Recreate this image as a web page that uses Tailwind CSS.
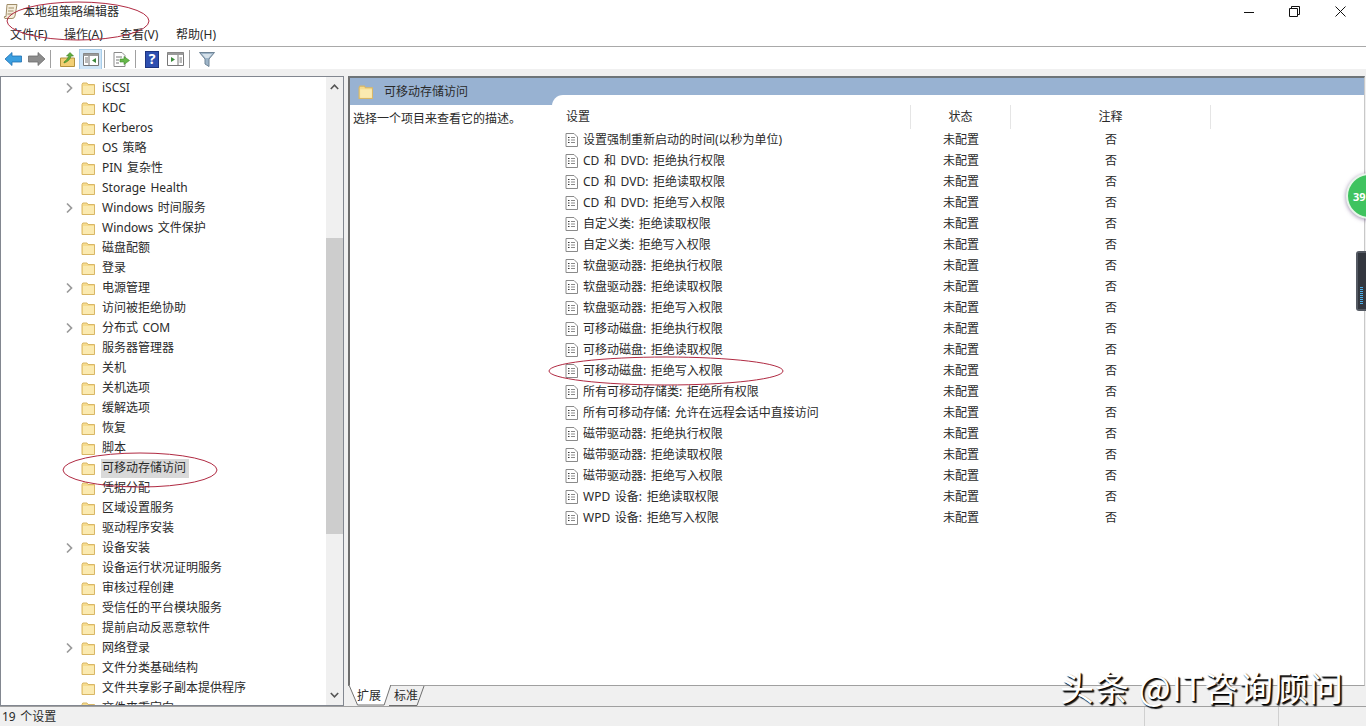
<!DOCTYPE html>
<html lang="zh-CN">
<head>
<meta charset="utf-8">
<title>本地组策略编辑器</title>
<script src="https://cdn.jsdelivr.net/npm/@tailwindcss/browser@4"></script>
</head>
<body>
<svg class="hidden">
  <symbol id="folder" viewBox="0 0 15 15">
    <path d="M1 3.5 L1.8 2 H6 L7 3.5 H13.5 V13.5 H1 Z" fill="#f6dc8e" stroke="#d9b766" stroke-width="1"/>
    <path d="M2 5 H13 V13 H2 Z" fill="#fbeab0"/>
  </symbol>
  <symbol id="chev" viewBox="0 0 8 12"><path d="M1.5 1.5 L6 6 L1.5 10.5" fill="none" stroke="#9a9a9a" stroke-width="1.7"/></symbol>
  <symbol id="doc" viewBox="0 0 13 14">
    <path d="M1 .5 H9 L12.5 4 V13.5 H1 Z" fill="#fff" stroke="#8a8a8a"/>
    <path d="M3 4.5 H4.5 M3 7 H4.5 M3 9.5 H4.5" stroke="#333" stroke-width="1.2"/>
    <path d="M6 4.5 H10 M6 7 H10 M6 9.5 H10" stroke="#8a8a8a" stroke-width="1"/>
  </symbol>
</svg>
<div class="relative w-[1366px] h-[726px] overflow-hidden flex flex-col bg-white text-[12px] leading-none text-[#2a2a2a] [word-spacing:1.5px] font-['Noto_Sans','Noto_Sans_CJK_SC',sans-serif]">

  <!-- title bar -->
  <div class="h-[23px] flex items-center pl-[3px] shrink-0">
    <svg width="16" height="17" viewBox="0 0 16 17"><path d="M4 1.5 H14 L12 13 Q11.5 15.5 9 15.5 H2 Q1 15.5 1.5 13.5 H3 Z" fill="#f5eedc" stroke="#a08d68"/><path d="M5.5 5 H11 M5 8 H10.5 M4.5 11 H10" stroke="#a08d68"/></svg>
    <span class="ml-[4px]">本地组策略编辑器</span>
    <div class="ml-auto flex items-center pr-[20px] gap-[35px]">
      <svg width="10" height="10" viewBox="0 0 10 10"><path d="M0 5.5 H10" stroke="#111"/></svg>
      <svg width="11" height="11" viewBox="0 0 11 11"><path d="M.5 2.5 H8.5 V10.5 H.5 Z M2.5 2.5 V.5 H10.5 V8.5 H8.5" fill="none" stroke="#111"/></svg>
      <svg width="11" height="11" viewBox="0 0 11 11"><path d="M.5 .5 L10.5 10.5 M10.5 .5 L.5 10.5" stroke="#111"/></svg>
    </div>
  </div>

  <!-- menu -->
  <div class="h-[23px] flex items-center pl-[10px] shrink-0 border-b border-[#a9a9a9] box-content">
    <span class="w-[54px]">文件(F)</span>
    <span class="w-[56px]">操作(A)</span>
    <span class="w-[56px]">查看(V)</span>
    <span>帮助(H)</span>
  </div>

  <!-- toolbar -->
  <div class="h-[22px] flex items-center pl-[5px] pt-[2px] shrink-0">
    <svg width="17" height="14" viewBox="0 0 17 14"><path d="M0 7 L7 .5 V4 H16.5 V10 H7 V13.5 Z" fill="#3b9fe0" stroke="#1f6fb0" stroke-width=".8"/></svg>
    <svg class="ml-[6px]" width="17" height="14" viewBox="0 0 17 14"><path d="M17 7 L10 .5 V4 H.5 V10 H10 V13.5 Z" fill="#8d8d8d" stroke="#6d6d6d" stroke-width=".8"/></svg>
    <div class="ml-[5px] w-px h-[18px] bg-[#a0a0a0]"></div>
    <svg class="ml-[9px]" width="15" height="15" viewBox="0 0 15 15"><path d="M.5 6 H14.5 V14.5 H.5 Z" fill="#f2cf74" stroke="#b4923e"/><path d="M4 10 Q7 8 9 4 L6.5 4 L10 .5 L13.5 4 H11 Q10 9 4 11 Z" fill="#5fae3b" stroke="#3d7d22" stroke-width=".6"/></svg>
    <div class="ml-[4px] w-[23px] h-[21px] bg-[#cfe5f7] border border-[#a8cde9] flex items-center justify-center">
      <svg width="16" height="13" viewBox="0 0 16 13"><path d="M.5 .5 H15.5 V12.5 H.5 Z" fill="#fff" stroke="#777"/><path d="M.5 .5 H15.5 V3 H.5 Z" fill="#9a9a9a"/><path d="M6 3 V12.5" stroke="#777"/><path d="M2 5 H5 M2 7 H5 M2 9 H5" stroke="#777"/><path d="M13 5 L9 7.5 L13 10 Z" fill="#3c8a3c"/></svg>
    </div>
    <div class="ml-[2px] w-px h-[18px] bg-[#a0a0a0]"></div>
    <svg class="ml-[8px]" width="17" height="15" viewBox="0 0 17 15"><path d="M1 .5 H9 L12 3.5 V14.5 H1 Z" fill="#fff" stroke="#8a8a8a"/><path d="M3 5 H9 M3 8 H6 M3 11 H6" stroke="#777"/><path d="M7 7 H11 V4.5 L16.5 8.5 L11 12.5 V10 H7 Z" fill="#66b84a" stroke="#3f8a2a" stroke-width=".6"/></svg>
    <div class="ml-[5px] w-px h-[18px] bg-[#a0a0a0]"></div>
    <div class="ml-[9px] w-[14px] h-[17px] bg-[#2e4fb0] border border-[#1c3480] text-white font-bold text-[14px] flex items-center justify-center">?</div>
    <svg class="ml-[8px]" width="17" height="14" viewBox="0 0 17 14"><path d="M.5 .5 H16.5 V13.5 H.5 Z" fill="#fff" stroke="#777"/><path d="M.5 .5 H16.5 V3 H.5 Z" fill="#9a9a9a"/><path d="M11 3 V13.5" stroke="#777"/><path d="M12.5 6 H15 M12.5 8 H15 M12.5 10 H15" stroke="#777"/><path d="M4 5 L8 7.5 L4 10 Z" fill="#3c8a3c"/></svg>
    <div class="ml-[5px] w-px h-[18px] bg-[#a0a0a0]"></div>
    <svg class="ml-[9px]" width="16" height="15" viewBox="0 0 16 15"><path d="M.5 .5 H15.5 L10 7 V14.5 L6 12 V7 Z" fill="#9db4c8" stroke="#6f8496"/><path d="M3 2 H13 L9.5 6 H6.5 Z" fill="#d5e1ea"/></svg>
  </div>

  <div class="h-[7px] bg-[#f0f0f0] shrink-0"></div>

  <!-- body -->
  <div class="h-[631px] flex bg-[#f0f0f0] shrink-0 border-b border-[#a0a0a0]">
    <!-- left pane -->
    <div class="w-[344px] h-[630px] border border-[#828790] bg-white flex overflow-hidden shrink-0">
      <div class="flex-1 h-[628px] overflow-hidden pt-px">
        <div class="h-5 flex items-center pl-[63px]"><svg class="w-[17px] h-[12px] pr-[6px]"><use href="#chev"/></svg><svg class="w-[15px] h-[15px]"><use href="#folder"/></svg><span class="ml-[6px]">iSCSI</span></div>
        <div class="h-5 flex items-center pl-[80px]"><svg class="w-[15px] h-[15px]"><use href="#folder"/></svg><span class="ml-[6px]">KDC</span></div>
        <div class="h-5 flex items-center pl-[80px]"><svg class="w-[15px] h-[15px]"><use href="#folder"/></svg><span class="ml-[6px]">Kerberos</span></div>
        <div class="h-5 flex items-center pl-[80px]"><svg class="w-[15px] h-[15px]"><use href="#folder"/></svg><span class="ml-[6px]">OS 策略</span></div>
        <div class="h-5 flex items-center pl-[80px]"><svg class="w-[15px] h-[15px]"><use href="#folder"/></svg><span class="ml-[6px]">PIN 复杂性</span></div>
        <div class="h-5 flex items-center pl-[80px]"><svg class="w-[15px] h-[15px]"><use href="#folder"/></svg><span class="ml-[6px]">Storage Health</span></div>
        <div class="h-5 flex items-center pl-[63px]"><svg class="w-[17px] h-[12px] pr-[6px]"><use href="#chev"/></svg><svg class="w-[15px] h-[15px]"><use href="#folder"/></svg><span class="ml-[6px]">Windows 时间服务</span></div>
        <div class="h-5 flex items-center pl-[80px]"><svg class="w-[15px] h-[15px]"><use href="#folder"/></svg><span class="ml-[6px]">Windows 文件保护</span></div>
        <div class="h-5 flex items-center pl-[80px]"><svg class="w-[15px] h-[15px]"><use href="#folder"/></svg><span class="ml-[6px]">磁盘配额</span></div>
        <div class="h-5 flex items-center pl-[80px]"><svg class="w-[15px] h-[15px]"><use href="#folder"/></svg><span class="ml-[6px]">登录</span></div>
        <div class="h-5 flex items-center pl-[63px]"><svg class="w-[17px] h-[12px] pr-[6px]"><use href="#chev"/></svg><svg class="w-[15px] h-[15px]"><use href="#folder"/></svg><span class="ml-[6px]">电源管理</span></div>
        <div class="h-5 flex items-center pl-[80px]"><svg class="w-[15px] h-[15px]"><use href="#folder"/></svg><span class="ml-[6px]">访问被拒绝协助</span></div>
        <div class="h-5 flex items-center pl-[63px]"><svg class="w-[17px] h-[12px] pr-[6px]"><use href="#chev"/></svg><svg class="w-[15px] h-[15px]"><use href="#folder"/></svg><span class="ml-[6px]">分布式 COM</span></div>
        <div class="h-5 flex items-center pl-[80px]"><svg class="w-[15px] h-[15px]"><use href="#folder"/></svg><span class="ml-[6px]">服务器管理器</span></div>
        <div class="h-5 flex items-center pl-[80px]"><svg class="w-[15px] h-[15px]"><use href="#folder"/></svg><span class="ml-[6px]">关机</span></div>
        <div class="h-5 flex items-center pl-[80px]"><svg class="w-[15px] h-[15px]"><use href="#folder"/></svg><span class="ml-[6px]">关机选项</span></div>
        <div class="h-5 flex items-center pl-[80px]"><svg class="w-[15px] h-[15px]"><use href="#folder"/></svg><span class="ml-[6px]">缓解选项</span></div>
        <div class="h-5 flex items-center pl-[80px]"><svg class="w-[15px] h-[15px]"><use href="#folder"/></svg><span class="ml-[6px]">恢复</span></div>
        <div class="h-5 flex items-center pl-[80px]"><svg class="w-[15px] h-[15px]"><use href="#folder"/></svg><span class="ml-[6px]">脚本</span></div>
        <div class="h-5 flex items-center pl-[80px]"><svg class="w-[15px] h-[15px]"><use href="#folder"/></svg><span class="ml-[5px] pl-px pr-[3px] h-[19px] flex items-center bg-[#d9d9d9]">可移动存储访问</span></div>
        <div class="h-5 flex items-center pl-[80px]"><svg class="w-[15px] h-[15px]"><use href="#folder"/></svg><span class="ml-[6px]">凭据分配</span></div>
        <div class="h-5 flex items-center pl-[80px]"><svg class="w-[15px] h-[15px]"><use href="#folder"/></svg><span class="ml-[6px]">区域设置服务</span></div>
        <div class="h-5 flex items-center pl-[80px]"><svg class="w-[15px] h-[15px]"><use href="#folder"/></svg><span class="ml-[6px]">驱动程序安装</span></div>
        <div class="h-5 flex items-center pl-[63px]"><svg class="w-[17px] h-[12px] pr-[6px]"><use href="#chev"/></svg><svg class="w-[15px] h-[15px]"><use href="#folder"/></svg><span class="ml-[6px]">设备安装</span></div>
        <div class="h-5 flex items-center pl-[80px]"><svg class="w-[15px] h-[15px]"><use href="#folder"/></svg><span class="ml-[6px]">设备运行状况证明服务</span></div>
        <div class="h-5 flex items-center pl-[80px]"><svg class="w-[15px] h-[15px]"><use href="#folder"/></svg><span class="ml-[6px]">审核过程创建</span></div>
        <div class="h-5 flex items-center pl-[80px]"><svg class="w-[15px] h-[15px]"><use href="#folder"/></svg><span class="ml-[6px]">受信任的平台模块服务</span></div>
        <div class="h-5 flex items-center pl-[80px]"><svg class="w-[15px] h-[15px]"><use href="#folder"/></svg><span class="ml-[6px]">提前启动反恶意软件</span></div>
        <div class="h-5 flex items-center pl-[63px]"><svg class="w-[17px] h-[12px] pr-[6px]"><use href="#chev"/></svg><svg class="w-[15px] h-[15px]"><use href="#folder"/></svg><span class="ml-[6px]">网络登录</span></div>
        <div class="h-5 flex items-center pl-[80px]"><svg class="w-[15px] h-[15px]"><use href="#folder"/></svg><span class="ml-[6px]">文件分类基础结构</span></div>
        <div class="h-5 flex items-center pl-[80px]"><svg class="w-[15px] h-[15px]"><use href="#folder"/></svg><span class="ml-[6px]">文件共享影子副本提供程序</span></div>
        <div class="h-5 flex items-center pl-[80px]"><svg class="w-[15px] h-[15px]"><use href="#folder"/></svg><span class="ml-[6px]">文件夹重定向</span></div>
      </div>
      <!-- scrollbar -->
      <div class="w-[17px] h-[628px] bg-[#f0f0f0] flex flex-col items-center shrink-0">
        <div class="h-[20px] flex items-center justify-center shrink-0"><svg width="9" height="6" viewBox="0 0 9 6"><path d="M.8 5 L4.5 1.2 L8.2 5" fill="none" stroke="#555" stroke-width="1.6"/></svg></div>
        <div class="h-[141px] shrink-0"></div>
        <div class="w-full h-[296px] bg-[#cdcdcd] shrink-0"></div>
        <div class="flex-1"></div>
        <div class="h-[20px] flex items-center justify-center shrink-0"><svg width="9" height="6" viewBox="0 0 9 6"><path d="M.8 1 L4.5 4.8 L8.2 1" fill="none" stroke="#555" stroke-width="1.6"/></svg></div>
      </div>
    </div>

    <!-- right pane -->
    <div class="ml-[4px] w-[1017px] h-[630px] flex flex-col shrink-0">
      <div class="h-[610px] border-l-2 border-t-2 border-b border-r border-l-[#6e6e6e] border-t-[#6e7478] border-b-[#a0a0a0] border-r-[#c8c8c8] bg-white flex">
        <!-- description column -->
        <div class="w-[202px] shrink-0 flex flex-col">
          <div class="h-[27px] bg-[#98b2d2] flex items-center pl-[8px]"><svg class="w-[16px] h-[16px]"><use href="#folder"/></svg><span class="ml-[10px]">可移动存储访问</span></div>
          <p class="pl-[3px] pt-[8px]">选择一个项目来查看它的描述。</p>
        </div>
        <!-- list column -->
        <div class="flex-1 bg-[#98b2d2] pt-[17px] flex flex-col">
          <div class="flex-1 bg-white rounded-tl-[11px] pt-[10px]">
            <div class="h-[24px] grid grid-cols-[359px_100px_200px] items-center">
              <span class="pl-[14px] border-r border-[#e5e5e5] h-[24px] flex items-center">设置</span>
              <span class="text-center border-r border-[#e5e5e5] h-[24px] flex items-center justify-center">状态</span>
              <span class="text-center border-r border-[#e5e5e5] h-[24px] flex items-center justify-center">注释</span>
            </div>
            <div class="h-[21px] grid grid-cols-[359px_100px_200px] items-center"><span class="pl-[13px] flex items-center"><svg class="w-[13px] h-[14px] mr-[5px]"><use href="#doc"/></svg>设置强制重新启动的时间(以秒为单位)</span><span class="text-center">未配置</span><span class="text-center">否</span></div>
            <div class="h-[21px] grid grid-cols-[359px_100px_200px] items-center"><span class="pl-[13px] flex items-center"><svg class="w-[13px] h-[14px] mr-[5px]"><use href="#doc"/></svg>CD 和 DVD: 拒绝执行权限</span><span class="text-center">未配置</span><span class="text-center">否</span></div>
            <div class="h-[21px] grid grid-cols-[359px_100px_200px] items-center"><span class="pl-[13px] flex items-center"><svg class="w-[13px] h-[14px] mr-[5px]"><use href="#doc"/></svg>CD 和 DVD: 拒绝读取权限</span><span class="text-center">未配置</span><span class="text-center">否</span></div>
            <div class="h-[21px] grid grid-cols-[359px_100px_200px] items-center"><span class="pl-[13px] flex items-center"><svg class="w-[13px] h-[14px] mr-[5px]"><use href="#doc"/></svg>CD 和 DVD: 拒绝写入权限</span><span class="text-center">未配置</span><span class="text-center">否</span></div>
            <div class="h-[21px] grid grid-cols-[359px_100px_200px] items-center"><span class="pl-[13px] flex items-center"><svg class="w-[13px] h-[14px] mr-[5px]"><use href="#doc"/></svg>自定义类: 拒绝读取权限</span><span class="text-center">未配置</span><span class="text-center">否</span></div>
            <div class="h-[21px] grid grid-cols-[359px_100px_200px] items-center"><span class="pl-[13px] flex items-center"><svg class="w-[13px] h-[14px] mr-[5px]"><use href="#doc"/></svg>自定义类: 拒绝写入权限</span><span class="text-center">未配置</span><span class="text-center">否</span></div>
            <div class="h-[21px] grid grid-cols-[359px_100px_200px] items-center"><span class="pl-[13px] flex items-center"><svg class="w-[13px] h-[14px] mr-[5px]"><use href="#doc"/></svg>软盘驱动器: 拒绝执行权限</span><span class="text-center">未配置</span><span class="text-center">否</span></div>
            <div class="h-[21px] grid grid-cols-[359px_100px_200px] items-center"><span class="pl-[13px] flex items-center"><svg class="w-[13px] h-[14px] mr-[5px]"><use href="#doc"/></svg>软盘驱动器: 拒绝读取权限</span><span class="text-center">未配置</span><span class="text-center">否</span></div>
            <div class="h-[21px] grid grid-cols-[359px_100px_200px] items-center"><span class="pl-[13px] flex items-center"><svg class="w-[13px] h-[14px] mr-[5px]"><use href="#doc"/></svg>软盘驱动器: 拒绝写入权限</span><span class="text-center">未配置</span><span class="text-center">否</span></div>
            <div class="h-[21px] grid grid-cols-[359px_100px_200px] items-center"><span class="pl-[13px] flex items-center"><svg class="w-[13px] h-[14px] mr-[5px]"><use href="#doc"/></svg>可移动磁盘: 拒绝执行权限</span><span class="text-center">未配置</span><span class="text-center">否</span></div>
            <div class="h-[21px] grid grid-cols-[359px_100px_200px] items-center"><span class="pl-[13px] flex items-center"><svg class="w-[13px] h-[14px] mr-[5px]"><use href="#doc"/></svg>可移动磁盘: 拒绝读取权限</span><span class="text-center">未配置</span><span class="text-center">否</span></div>
            <div class="h-[21px] grid grid-cols-[359px_100px_200px] items-center"><span class="pl-[13px] flex items-center"><svg class="w-[13px] h-[14px] mr-[5px]"><use href="#doc"/></svg>可移动磁盘: 拒绝写入权限</span><span class="text-center">未配置</span><span class="text-center">否</span></div>
            <div class="h-[21px] grid grid-cols-[359px_100px_200px] items-center"><span class="pl-[13px] flex items-center"><svg class="w-[13px] h-[14px] mr-[5px]"><use href="#doc"/></svg>所有可移动存储类: 拒绝所有权限</span><span class="text-center">未配置</span><span class="text-center">否</span></div>
            <div class="h-[21px] grid grid-cols-[359px_100px_200px] items-center"><span class="pl-[13px] flex items-center"><svg class="w-[13px] h-[14px] mr-[5px]"><use href="#doc"/></svg>所有可移动存储: 允许在远程会话中直接访问</span><span class="text-center">未配置</span><span class="text-center">否</span></div>
            <div class="h-[21px] grid grid-cols-[359px_100px_200px] items-center"><span class="pl-[13px] flex items-center"><svg class="w-[13px] h-[14px] mr-[5px]"><use href="#doc"/></svg>磁带驱动器: 拒绝执行权限</span><span class="text-center">未配置</span><span class="text-center">否</span></div>
            <div class="h-[21px] grid grid-cols-[359px_100px_200px] items-center"><span class="pl-[13px] flex items-center"><svg class="w-[13px] h-[14px] mr-[5px]"><use href="#doc"/></svg>磁带驱动器: 拒绝读取权限</span><span class="text-center">未配置</span><span class="text-center">否</span></div>
            <div class="h-[21px] grid grid-cols-[359px_100px_200px] items-center"><span class="pl-[13px] flex items-center"><svg class="w-[13px] h-[14px] mr-[5px]"><use href="#doc"/></svg>磁带驱动器: 拒绝写入权限</span><span class="text-center">未配置</span><span class="text-center">否</span></div>
            <div class="h-[21px] grid grid-cols-[359px_100px_200px] items-center"><span class="pl-[13px] flex items-center"><svg class="w-[13px] h-[14px] mr-[5px]"><use href="#doc"/></svg>WPD 设备: 拒绝读取权限</span><span class="text-center">未配置</span><span class="text-center">否</span></div>
            <div class="h-[21px] grid grid-cols-[359px_100px_200px] items-center"><span class="pl-[13px] flex items-center"><svg class="w-[13px] h-[14px] mr-[5px]"><use href="#doc"/></svg>WPD 设备: 拒绝写入权限</span><span class="text-center">未配置</span><span class="text-center">否</span></div>
          </div>
        </div>
      </div>
      <!-- tabs -->
      <div class="h-[20px] flex relative">
        <div class="relative w-[40px] ml-[1px] flex items-center justify-center"><svg class="absolute left-0 top-[-1px]" width="42" height="21" viewBox="0 0 42 21"><path d="M0 0 L9 20 H37 L44 0" transform="scale(.95 1)" fill="#fff" stroke="#6e6e6e"/></svg><span class="relative">扩展</span></div>
        <div class="relative w-[36px] flex items-center justify-center"><svg class="absolute left-[-3px] top-0" width="40" height="20" viewBox="0 0 40 20"><path d="M3 19.5 H31 L38 0" fill="none" stroke="#6e6e6e"/></svg><span class="relative left-[-1px]">标准</span></div>
      </div>
    </div>
  </div>

  <!-- status bar -->
  <div class="flex-1 bg-[#f0f0f0] flex items-center">
    <span class="pl-[2px] w-[1145px] border-r border-[#d0d0d0] h-full flex items-center">19 个设置</span>
    <span class="w-[134px] border-r border-[#d0d0d0] h-full"></span>
  </div>

  <!-- annotations and overlays -->
  <svg class="absolute left-0 top-0 pointer-events-none" width="1366" height="726" viewBox="0 0 1366 726">
    <ellipse cx="78" cy="21" rx="71" ry="19" fill="none" stroke="#b02a42"/>
    <ellipse cx="140" cy="470" rx="77" ry="17" fill="none" stroke="#b02a42"/>
    <ellipse cx="666" cy="371" rx="117" ry="14" fill="none" stroke="#b02a42"/>
  </svg>

  <div class="absolute left-[1346px] top-[173px] w-[46px] h-[46px] rounded-full bg-[#3fc35f] border-2 border-[#e8f5ea] shadow-[0_1px_4px_rgba(90,60,120,.6)] flex items-center pl-[5px] text-white text-[11px] font-bold">39</div>
  <div class="absolute left-[1356px] top-[251px] w-[14px] h-[60px] rounded-[3px] bg-[#555a63] p-[2px] flex flex-col justify-end">
    <div class="flex-1 bg-[#33373f] flex flex-col justify-end items-start pl-[2px] pb-[4px]">
      <div class="w-[3px] h-[18px] bg-[repeating-linear-gradient(to_bottom,#4fb0e8_0,#4fb0e8_1px,#33373f_1px,#33373f_2px)]"></div>
    </div>
  </div>

  <div class="absolute left-[1060px] top-[668px] text-[34px] leading-[38px] tracking-[1px] whitespace-nowrap text-white [word-spacing:0] [text-shadow:1px_1px_1px_#000,2px_2px_1px_#222] font-['Noto_Sans_CJK_SC','Noto_Sans',sans-serif]">头条 @IT咨询顾问</div>
</div>
</body>
</html>
